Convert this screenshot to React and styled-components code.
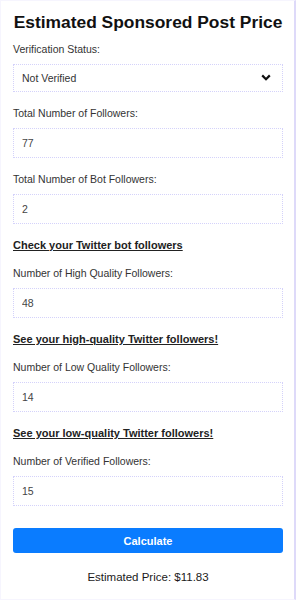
import React, { useState } from "react";
import styled, { createGlobalStyle } from "styled-components";

const GlobalStyle = createGlobalStyle`
  html, body {
    margin: 0;
    padding: 0;
    background: #ffffff;
  }
  * {
    box-sizing: border-box;
  }
`;

const Card = styled.div`
  width: 296px;
  min-height: 600px;
  background: #ffffff;
  border: 1px solid #f6f5fe;
  border-right: 2px solid #dedaf9;
  padding: 10.5px 11px 0 12px;
  font-family: "Liberation Sans", Arial, sans-serif;
  color: #333;
`;

const Title = styled.h2`
  margin: 0 0 11.5px;
  font-size: 17.4px;
  line-height: 20px;
  font-weight: 700;
  color: #111;
  text-align: center;
  white-space: nowrap;
`;

const Group = styled.div`
  margin-bottom: 15px;
`;

const Label = styled.label`
  display: block;
  font-size: 10.5px;
  line-height: 13px;
  margin-bottom: 8px;
  color: #333;
`;

const Input = styled.input`
  display: block;
  width: 100%;
  height: 30px;
  margin: 0;
  padding: 0 8px;
  border: 1px dotted #d4d2fa;
  border-radius: 0;
  background: #fff;
  font-family: inherit;
  font-size: 10.5px;
  color: #444;
  outline: none;
`;

const SelectWrap = styled.div`
  position: relative;
`;

const Select = styled.select`
  display: block;
  width: 100%;
  height: 28px;
  margin: 0;
  padding: 0 8px;
  border: 1px dotted #d4d2fa;
  border-radius: 0;
  background: #fff;
  font-family: inherit;
  font-size: 10.5px;
  color: #333;
  appearance: none;
  -webkit-appearance: none;
  outline: none;
`;

const Chevron = styled.span`
  position: absolute;
  right: 12px;
  top: 10px;
  width: 10px;
  height: 7px;
  pointer-events: none;
  display: flex;
`;

const Link = styled.a`
  display: block;
  width: fit-content;
  font-size: 11px;
  line-height: 13px;
  font-weight: 700;
  color: #222;
  text-decoration: underline;
  margin-bottom: 15px;
`;

const Button = styled.button`
  display: block;
  width: 100%;
  height: 25px;
  margin: 22px 0 0;
  border: none;
  border-radius: 3px;
  background: #0a7cff;
  color: #fff;
  font-family: inherit;
  font-size: 11px;
  font-weight: 700;
  cursor: pointer;
`;

const Result = styled.div`
  margin-top: 17.5px;
  font-size: 11.5px;
  line-height: 13px;
  text-align: center;
  color: #1a1a1a;
`;

const fields = [
  { id: "total", label: "Total Number of Followers:", value: "77" },
  {
    id: "bot",
    label: "Total Number of Bot Followers:",
    value: "2",
    link: "Check your Twitter bot followers",
  },
  {
    id: "high",
    label: "Number of High Quality Followers:",
    value: "48",
    link: "See your high-quality Twitter followers!",
  },
  {
    id: "low",
    label: "Number of Low Quality Followers:",
    value: "14",
    link: "See your low-quality Twitter followers!",
  },
  { id: "verified", label: "Number of Verified Followers:", value: "15" },
];

const App = () => {
  const [status, setStatus] = useState("not");

  return (
    <>
      <GlobalStyle />
      <Card>
        <Title>Estimated Sponsored Post Price</Title>
        <Group>
          <Label htmlFor="status">Verification Status:</Label>
          <SelectWrap>
            <Select
              id="status"
              value={status}
              onChange={(e) => setStatus(e.target.value)}
            >
              <option value="not">Not Verified</option>
              <option value="yes">Verified</option>
            </Select>
            <Chevron>
              <svg width="10" height="7" viewBox="0 0 10 7">
                <path
                  d="M1.2 1.4 L5 5.2 L8.8 1.4"
                  fill="none"
                  stroke="#111"
                  strokeWidth="2.2"
                />
              </svg>
            </Chevron>
          </SelectWrap>
        </Group>
        {fields.map((f) => (
          <React.Fragment key={f.id}>
            <Group>
              <Label htmlFor={f.id}>{f.label}</Label>
              <Input id={f.id} type="text" defaultValue={f.value} />
            </Group>
            {f.link && <Link href="#">{f.link}</Link>}
          </React.Fragment>
        ))}
        <Button>Calculate</Button>
        <Result>Estimated Price: $11.83</Result>
      </Card>
    </>
  );
};

export default App;
